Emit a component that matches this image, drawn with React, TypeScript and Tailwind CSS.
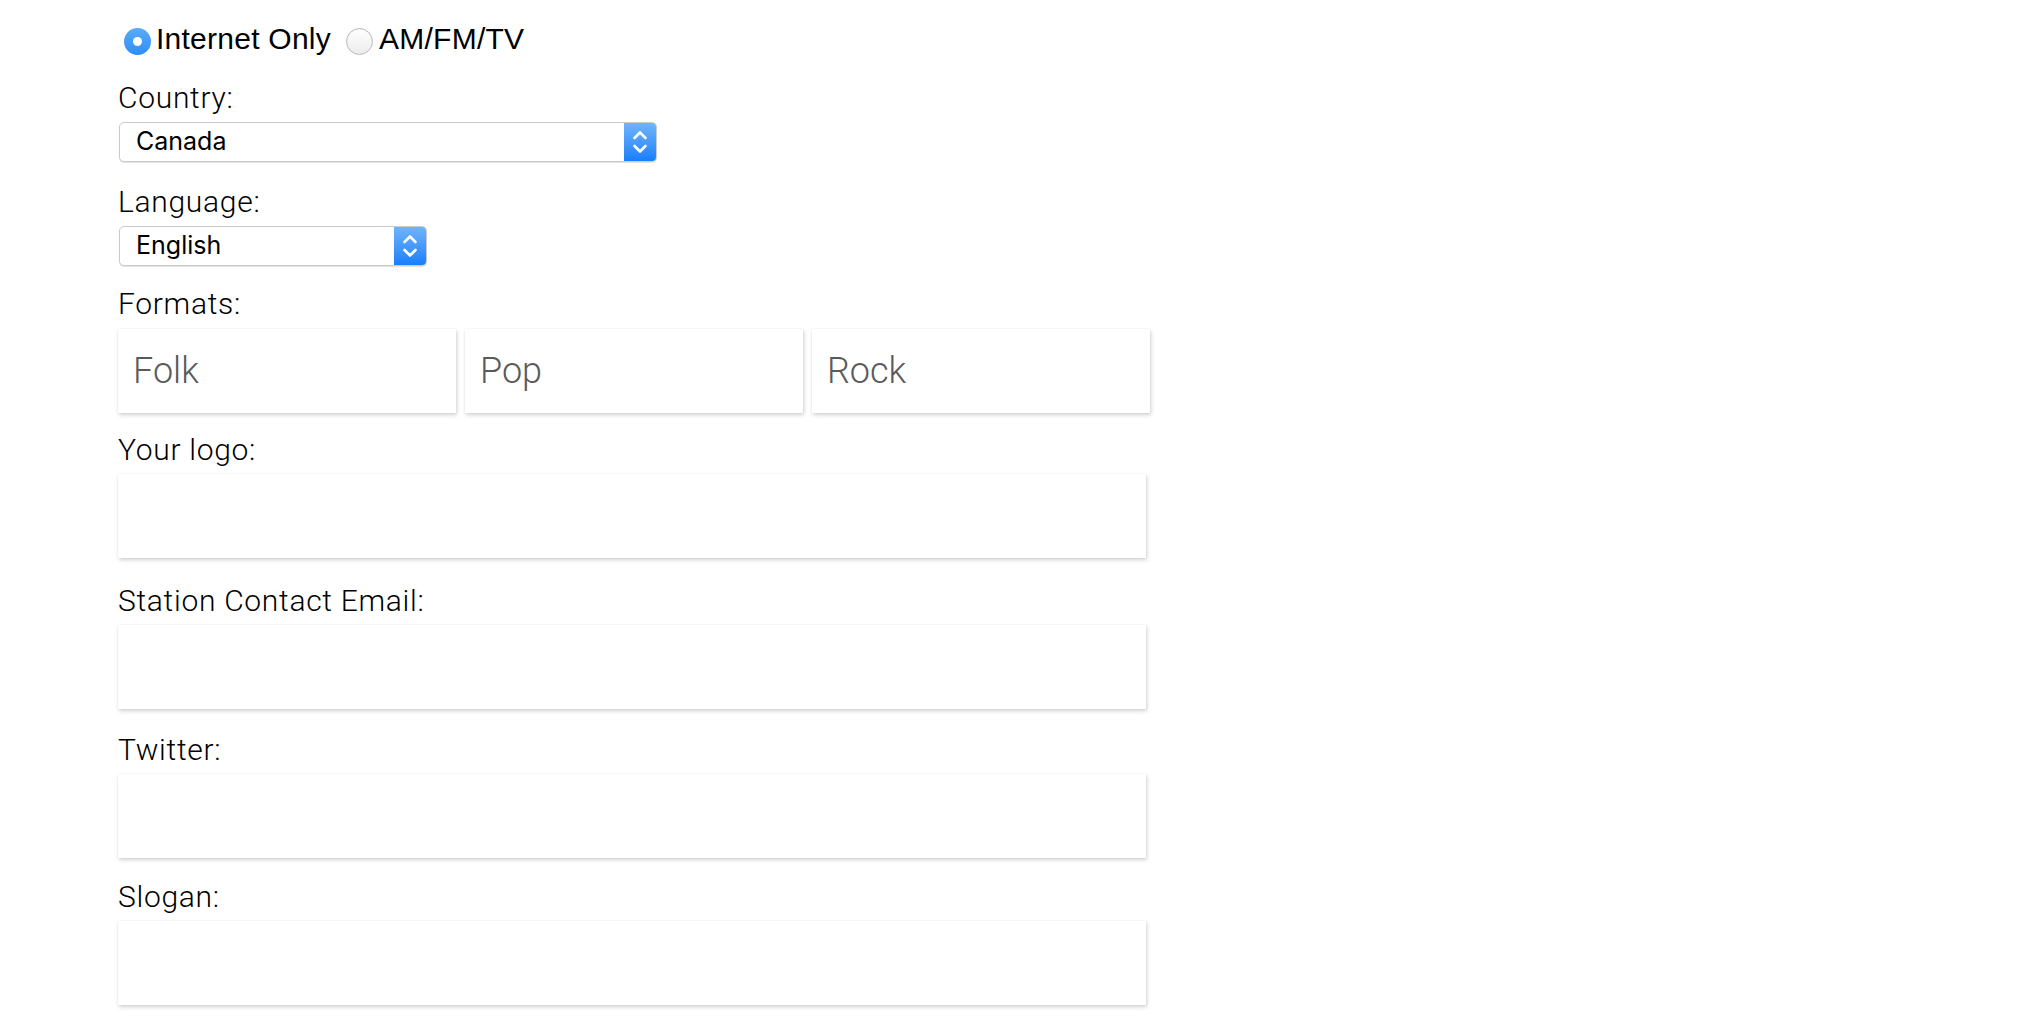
const labelFont = { fontFamily: '"Roboto", "Liberation Sans", sans-serif' };

const Chevrons = () => (
  <svg width="16" height="28" viewBox="0 0 16 28" fill="none" stroke="white" strokeWidth="2.6" strokeLinecap="round" strokeLinejoin="round">
    <path d="M2.5 10 L8 4.5 L13.5 10" />
    <path d="M2.5 18 L8 23.5 L13.5 18" />
  </svg>
);

const Select = ({ value, width }: { value: string; width: string }) => (
  <div
    className={`${width} ml-px h-[40px] flex rounded-[5px] border border-[#cacaca] bg-white shadow-[0_1px_1px_rgba(0,0,0,0.12)] overflow-hidden`}
  >
    <div className="flex-1 flex items-center pl-[16px] text-[25px] text-black font-[Inter,sans-serif]">{value}</div>
    <div className="w-[32px] flex items-center justify-center bg-gradient-to-b from-[#6db4fb] to-[#167ffb]">
      <Chevrons />
    </div>
  </div>
);

const Label = ({ children, className = "" }: { children: React.ReactNode; className?: string }) => (
  <div className={`text-[30px] leading-[34px] font-light tracking-[0.7px] text-black ${className}`} style={labelFont}>
    {children}
  </div>
);

const Box = ({ placeholder, className = "" }: { placeholder?: string; className?: string }) => (
  <div
    className={`h-[84px] flex items-center pl-[15px] bg-white shadow-[1px_2px_4px_rgba(0,0,0,0.18),0_0_1px_rgba(0,0,0,0.1)] ${className}`}
  >
    {placeholder && (
      <span className="text-[36px] leading-none font-light text-[#5a5a5a]" style={labelFont}>
        {placeholder}
      </span>
    )}
  </div>
);

export default function App() {
  return (
    <div className="min-h-screen bg-white pl-[118px] pt-[21px]">
      <div className="flex items-center h-[34px] text-[30px] tracking-[0.25px] text-black font-['Liberation_Sans',sans-serif]">
        <span className="ml-[6px] mt-[6px] w-[27px] h-[27px] rounded-full bg-gradient-to-b from-[#5aaaf8] to-[#2d8ef5] flex items-center justify-center">
          <span className="w-[9px] h-[9px] rounded-full bg-white" />
        </span>
        <span className="ml-[5px]">Internet Only</span>
        <span className="ml-[15px] mt-[6px] w-[27px] h-[27px] rounded-full border border-[#b9b9b9] bg-gradient-to-b from-white to-[#ececec] shadow-[inset_0_1px_1px_rgba(0,0,0,0.05)]" />
        <span className="ml-[6px]">AM/FM/TV</span>
      </div>

      <Label className="mt-[26px]">Country:</Label>
      <div className="mt-[7px]">
        <Select value="Canada" width="w-[538px]" />
      </div>

      <Label className="mt-[23px]">Language:</Label>
      <div className="mt-[7px]">
        <Select value="English" width="w-[308px]" />
      </div>

      <Label className="mt-[21px]">Formats:</Label>
      <div className="mt-[8px] grid grid-cols-3 gap-[9px] w-[1032px]">
        <Box placeholder="Folk" />
        <Box placeholder="Pop" />
        <Box placeholder="Rock" />
      </div>

      <Label className="mt-[20px]">Your logo:</Label>
      <Box className="mt-[7px] w-[1028px]" />

      <Label className="mt-[26px]">Station Contact Email:</Label>
      <Box className="mt-[7px] w-[1028px]" />

      <Label className="mt-[24px]">Twitter:</Label>
      <Box className="mt-[7px] w-[1028px]" />

      <Label className="mt-[22px]">Slogan:</Label>
      <Box className="mt-[7px] w-[1028px]" />
    </div>
  );
}
